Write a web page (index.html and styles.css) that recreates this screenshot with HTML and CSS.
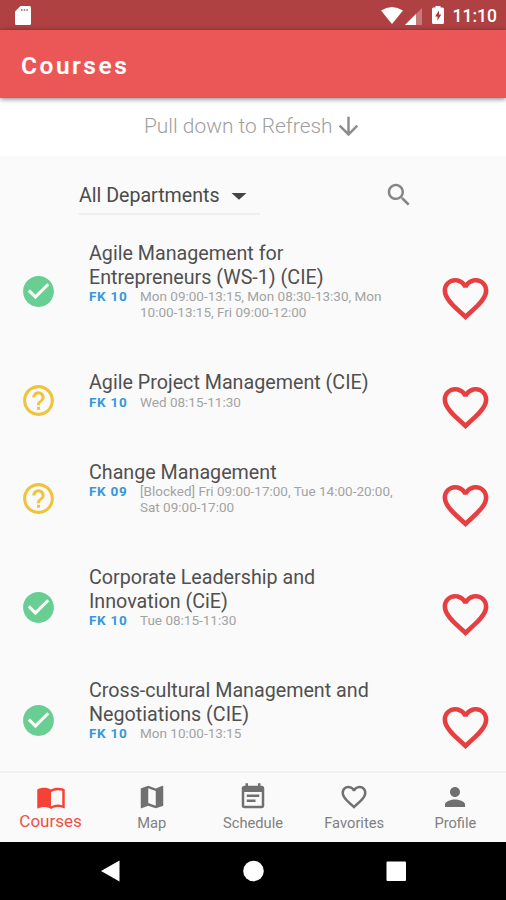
FILE: index.html
```html
<!DOCTYPE html>
<html lang="en">
<head>
<meta charset="utf-8">
<title>Courses</title>
<link rel="stylesheet" href="styles.css">
</head>
<body>
<svg class="defs" aria-hidden="true">
  <symbol id="heart" viewBox="0 0 24 24"><path d="M16.5 3c-1.74 0-3.41.81-4.5 2.09C10.91 3.81 9.24 3 7.5 3 4.42 3 2 5.42 2 8.5c0 3.78 3.4 6.86 8.55 11.54L12 21.35l1.45-1.32C18.6 15.36 22 12.28 22 8.5 22 5.42 19.58 3 16.5 3zm-4.4 15.55l-.1.1-.1-.1C7.14 14.24 4 11.39 4 8.5 4 6.5 5.5 5 7.5 5c1.54 0 3.04.99 3.57 2.36h1.87C13.46 5.99 14.96 5 16.5 5c2 0 3.5 1.5 3.5 3.5 0 2.89-3.14 5.74-7.9 10.05z"/></symbol>
  <symbol id="check" viewBox="0 0 24 24"><path d="M12 2C6.48 2 2 6.48 2 12s4.48 10 10 10 10-4.48 10-10S17.52 2 12 2zm-2 15l-5-5 1.41-1.41L10 14.17l7.59-7.59L19 8l-9 9z"/></symbol>
  <symbol id="help" viewBox="0 0 24 24"><path d="M11 18h2v-2h-2v2zm1-16C6.48 2 2 6.48 2 12s4.48 10 10 10 10-4.48 10-10S17.52 2 12 2zm0 18c-4.41 0-8-3.59-8-8s3.59-8 8-8 8 3.59 8 8-3.59 8-8 8zm0-14c-2.21 0-4 1.79-4 4h2c0-1.1.9-2 2-2s2 .9 2 2c0 2-3 1.75-3 5h2c0-2.25 3-2.5 3-5 0-2.21-1.79-4-4-4z"/></symbol>
</svg>

<div class="status">
  <svg class="sd" viewBox="0 0 16 19"><path d="M5.5 0H14.5Q16 0 16 1.5V17.5Q16 19 14.5 19H1.5Q0 19 0 17.5V5.5z"/><path class="sd-pins" d="M6 3h1.5v2H6zM8.7 3h1.5v2H8.7zM11.4 3h1.5v2h-1.5z"/></svg>
  <div class="status-right">
    <svg class="wifi" viewBox="0 0 22 17"><path d="M0 3.5Q11-3.5 22 3.5L11 17z"/></svg>
    <svg class="cell" viewBox="0 0 17 17"><path class="faint" d="M17 0V17H0z"/><path d="M11 6V17H0z"/></svg>
    <svg class="battery" viewBox="0 0 12 18"><path d="M3.5 0h5v1.5h2Q12 1.5 12 3v13.500Q12 18 10.5 18h-9Q0 18 0 16.5V3Q0 1.5 1.5 1.5h2z"/><path class="bolt" d="M7 4.5L3 10.5h2.500v4L9.3 8.5H7z"/></svg>
    <span class="clock">11:10</span>
  </div>
</div>
<header class="appbar"><h1>Courses</h1></header>
<div class="refresh">
  <span>Pull down to Refresh</span>
  <svg viewBox="0 0 24 24"><path d="M20 12l-1.41-1.41L13 16.17V4h-2v12.17l-5.58-5.59L4 12l8 8 8-8z"/></svg>
</div>

<main>
  <div class="filter">
    <div class="select"><span>All Departments</span><svg viewBox="0 0 24 24"><path d="M6 9.5l6 5.5 6-5.5z"/></svg></div>
    <svg class="search" viewBox="0 0 24 24"><path d="M15.5 14h-.79l-.28-.27C15.41 12.59 16 11.11 16 9.5 16 5.91 13.09 3 9.5 3S3 5.91 3 9.5 5.91 16 9.5 16c1.61 0 3.09-.59 4.23-1.57l.27.28v.79l5 4.99L20.49 19l-4.99-5zm-6 0C7.01 14 5 11.99 5 9.5S7.01 5 9.5 5 14 7.01 14 9.5 11.99 14 9.5 14z"/></svg>
  </div>

  <article class="course">
    <svg class="state ok"><use href="#check"/></svg>
    <div class="info">
      <h2>Agile Management for<br>Entrepreneurs (WS-1) (CIE)</h2>
      <div class="meta"><b>FK 10</b><span>Mon 09:00-13:15, Mon 08:30-13:30, Mon<br>10:00-13:15, Fri 09:00-12:00</span></div>
    </div>
    <svg class="fav"><use href="#heart"/></svg>
  </article>
  <article class="course">
    <svg class="state ask"><use href="#help"/></svg>
    <div class="info">
      <h2>Agile Project Management (CIE)</h2>
      <div class="meta"><b>FK 10</b><span>Wed 08:15-11:30</span></div>
    </div>
    <svg class="fav"><use href="#heart"/></svg>
  </article>
  <article class="course">
    <svg class="state ask"><use href="#help"/></svg>
    <div class="info">
      <h2>Change Management</h2>
      <div class="meta"><b>FK 09</b><span>[Blocked] Fri 09:00-17:00, Tue 14:00-20:00,<br>Sat 09:00-17:00</span></div>
    </div>
    <svg class="fav"><use href="#heart"/></svg>
  </article>
  <article class="course">
    <svg class="state ok"><use href="#check"/></svg>
    <div class="info">
      <h2>Corporate Leadership and<br>Innovation (CiE)</h2>
      <div class="meta"><b>FK 10</b><span>Tue 08:15-11:30</span></div>
    </div>
    <svg class="fav"><use href="#heart"/></svg>
  </article>
  <article class="course">
    <svg class="state ok"><use href="#check"/></svg>
    <div class="info">
      <h2>Cross-cultural Management and<br>Negotiations (CIE)</h2>
      <div class="meta"><b>FK 10</b><span>Mon 10:00-13:15</span></div>
    </div>
    <svg class="fav"><use href="#heart"/></svg>
  </article>
</main>

<nav class="tabs">
  <a class="tab active"><svg viewBox="0 0 24 24"><path d="M21 5c-1.11-.35-2.33-.5-3.5-.5-1.95 0-4.05.4-5.5 1.5-1.45-1.1-3.55-1.5-5.5-1.5S2.45 4.9 1 6v14.65c0 .25.25.5.5.5.1 0 .15-.05.25-.05C3.1 20.45 5.05 20 6.5 20c1.95 0 4.05.4 5.5 1.5 1.35-.85 3.8-1.5 5.5-1.5 1.65 0 3.35.3 4.75 1.05.1.05.15.05.25.05.25 0 .5-.25.5-.5V6c-.6-.45-1.25-.75-2-1zm0 13.5c-1.1-.35-2.3-.5-3.5-.5-1.7 0-4.15.65-5.5 1.5V8c1.35-.85 3.8-1.5 5.5-1.5 1.2 0 2.4.15 3.5.5v11.5z"/></svg><span>Courses</span></a>
  <a class="tab"><svg viewBox="0 0 24 24"><path d="M20.5 3l-.16.03L15 5.1 9 3 3.36 4.9c-.21.07-.36.25-.36.48V20.5c0 .28.22.5.5.5l.16-.03L9 18.9l6 2.1 5.64-1.9c.21-.07.36-.25.36-.48V3.5c0-.28-.22-.5-.5-.5zM15 19l-6-2.11V5l6 2.11V19z"/></svg><span>Map</span></a>
  <a class="tab"><svg viewBox="0 0 24 24"><path d="M17 10H7v2h10v-2zm2-7h-1V1h-2v2H8V1H6v2H5c-1.11 0-1.99.9-1.99 2L3 19c0 1.1.89 2 2 2h14c1.1 0 2-.9 2-2V5c0-1.1-.9-2-2-2zm0 16H5V8h14v11zm-5-5H7v2h7v-2z"/></svg><span>Schedule</span></a>
  <a class="tab"><svg><use href="#heart"/></svg><span>Favorites</span></a>
  <a class="tab"><svg viewBox="0 0 24 24"><path d="M12 12c2.21 0 4-1.79 4-4s-1.79-4-4-4-4 1.79-4 4 1.79 4 4 4zm0 2c-2.67 0-8 1.34-8 4v2h16v-2c0-2.66-5.33-4-8-4z"/></svg><span>Profile</span></a>
</nav>
<div class="sysnav">
  <svg viewBox="0 0 22 22"><path d="M19.500.5v21L1 11z"/></svg>
  <svg viewBox="0 0 22 22"><circle cx="10.500" cy="11" r="10.300"/></svg>
  <svg viewBox="0 0 22 22"><rect x="1.500" y="1.500" width="19.500" height="19.500" rx="1"/></svg>
</div>
</body>
</html>
```
FILE: styles.css
```css
* { box-sizing: border-box; margin: 0; padding: 0; }

body {
  width: 506px;
  height: 900px;
  overflow: hidden;
  display: flex;
  flex-direction: column;
  background: #fafafa;
  font-family: Roboto, "Liberation Sans", sans-serif;
}

svg { display: block; flex: none; fill: currentColor; }
.defs { position: absolute; width: 0; height: 0; }

.status {
  flex: none;
  height: 30px;
  padding: 0 9px 0 15px;
  display: flex;
  justify-content: space-between;
  align-items: center;
  background: #b04143;
  color: #fff;
}
.sd { width: 16px; height: 19px; }
.sd-pins { fill: #b98083; }
.status-right { display: flex; align-items: center; }
.wifi { width: 22px; height: 17px; margin-right: 2px; }
.cell { width: 17px; height: 17px; margin: 2px 10px 0 0; }
.faint { opacity: .3; }
.battery { width: 12px; height: 18px; margin-right: 9px; }
.bolt { fill: #a5363a; }
.clock { font-size: 17.5px; line-height: 30px; font-weight: 500; margin-top: 2px; }

.appbar {
  flex: none;
  position: relative;
  height: 68px;
  padding: 0 21px;
  display: flex;
  align-items: center;
  background: #eb5757;
  color: #fff;
  box-shadow: 0 1px 5px rgba(0, 0, 0, .5);
}
.appbar h1 { font-size: 24.5px; font-weight: 600; letter-spacing: 2.5px; margin-top: 2px; }

.refresh {
  flex: none;
  height: 58px;
  padding: 0 0 2px 144px;
  display: flex;
  align-items: center;
  background: #fff;
  color: #a0a0a0;
  font-size: 20.9px;
  font-weight: 300;
}
.refresh svg { width: 29px; height: 29px; margin-left: 1px; color: #8c8c8c; }

main { flex: 1; min-height: 0; overflow: hidden; }

.filter {
  height: 61.4px;
  padding: 20px 92px 0 79px;
  display: flex;
  justify-content: space-between;
  align-items: flex-start;
}
.select {
  width: 181px;
  height: 39px;
  padding-right: 6px;
  display: flex;
  justify-content: space-between;
  align-items: center;
  border-bottom: 2px solid #eee;
  color: #4a4a4a;
  font-size: 19.6px;
}
.select span { margin-top: 1px; }
.select svg { width: 30px; height: 30px; margin-top: 2px; color: #444; }
.search { width: 30px; height: 30px; margin-top: 4px; color: #858585; }

.course {
  display: grid;
  grid-template-columns: 69px 1fr 68px;
  align-items: center;
  padding: 25px 13px 25.3px 20px;
}
.state { width: 37px; height: 37px; position: relative; top: 9.6px; }
.ok { color: #68ce92; }
.ask { color: #f0c33c; }
.info h2 {
  font-size: 19.7px;
  line-height: 23.3px;
  font-weight: 400;
  color: #505050;
}
.meta {
  display: flex;
  position: relative;
  top: -.7px;
  font-size: 13.5px;
  line-height: 16px;
  color: #a3a3a3;
}
.meta b { width: 51px; flex: none; font-weight: 700; letter-spacing: .7px; color: #3498db; }
.meta span { white-space: nowrap; }
.fav {
  width: 55px;
  height: 55px;
  margin: -10px 0;
  justify-self: end;
  position: relative;
  top: 17px;
  color: #e53f42;
}

.tabs {
  flex: none;
  height: 71px;
  display: grid;
  grid-template-columns: repeat(5, 1fr);
  border-top: 2px solid #f1f1f1;
  background: #fafafa;
  color: #707070;
}
.tab {
  display: flex;
  flex-direction: column;
  align-items: center;
  padding-top: 9px;
  font-size: 14.7px;
  line-height: 20px;
}
.tab svg { width: 30px; height: 30px; }
.tab span { margin-top: 1px; color: #808080; }
.tab.active { color: #f44336; font-size: 17px; }
.tab.active span { margin-top: -1px; color: #f04f45; }

.sysnav {
  flex: none;
  height: 58px;
  padding: 0 99px 0 100px;
  display: flex;
  justify-content: space-between;
  align-items: center;
  background: #000;
  color: #fff;
}
.sysnav svg { width: 22px; height: 22px; }
```
